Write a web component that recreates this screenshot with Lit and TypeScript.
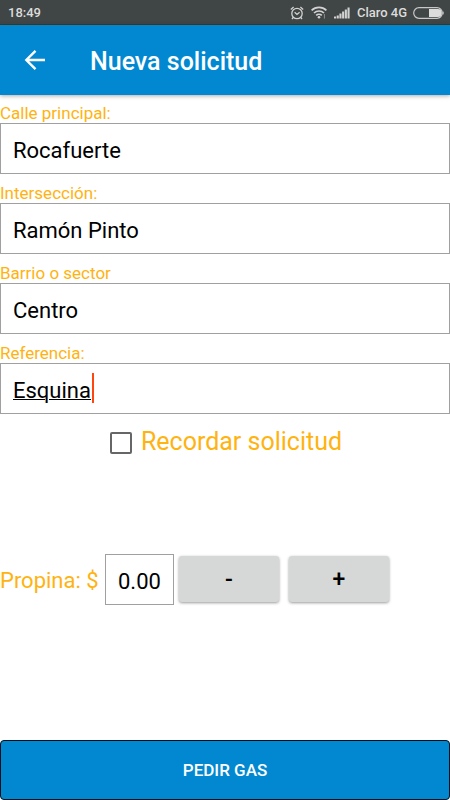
import { LitElement, html, css, svg } from "lit";
import { customElement, state } from "lit/decorators.js";
import { classMap } from "lit/directives/class-map.js";

interface Field {
  id: string;
  label: string;
  value: string;
  active?: boolean;
}

@customElement("status-bar")
class StatusBar extends LitElement {
  static styles = css`
    :host {
      display: flex;
      align-items: center;
      box-sizing: border-box;
      height: 25px;
      padding: 1px 6px 0 8px;
      background: #404545;
      border-bottom: 1px solid #3a3a22;
      color: #dcdcdc;
      font: 500 13px/24px Roboto, sans-serif;
    }
    .time {
      flex: 1;
    }
    .icon {
      display: block;
      flex: none;
    }
    .alarm {
      margin-right: 7px;
    }
    .wifi,
    .signal {
      margin-right: 7px;
    }
    .battery {
      margin-left: 6px;
    }
  `;

  render() {
    return html`
      <span class="time">18:49</span>
      <svg class="icon alarm" width="14" height="14" viewBox="0 0 14 14" fill="none" stroke="#d2d2d2" stroke-width="1.3">
        <circle cx="7" cy="7.5" r="5.2" />
        <path d="M0.8 3.4 3.6 1M13.2 3.4 10.4 1M3.2 11.5 2 13M10.8 11.5 12 13M4.6 6.2 7 8.4 9.6 6.2" />
      </svg>
      <svg class="icon wifi" width="16" height="13" viewBox="0 0 16 13" fill="none" stroke="#d2d2d2" stroke-width="1.7">
        <path d="M0.6 4.4a10.6 10.6 0 0 1 14.8 0M3 7a7.2 7.2 0 0 1 10 0M5.2 9.4a4 4 0 0 1 5.6 0" />
        <circle cx="8" cy="11.2" r="1.3" fill="#d2d2d2" stroke="none" />
        <path d="M13.4 8v4.6" stroke="#8c8f8f" stroke-width="1" />
      </svg>
      <svg class="icon signal" width="16" height="12" viewBox="0 0 16 12" fill="#d2d2d2">
        ${[2, 3, 5, 7, 9, 11].map(
          (h, i) => svg`<rect x=${i * 2.7} y=${11.5 - h} width="2.1" height=${h} />`
        )}
      </svg>
      <span>Claro 4G</span>
      <svg class="icon battery" width="31" height="12" viewBox="0 0 31 12">
        <rect x="0.7" y="0.7" width="28.6" height="10.6" rx="5.3" fill="none" stroke="#c8c8c8" stroke-width="1.2" />
        <path d="M16 2h8.8a4 4 0 0 1 0 8H16z" fill="#dcdcdc" />
        <path d="M30.2 4.6v2.8" stroke="#c8c8c8" stroke-width="1" />
      </svg>
    `;
  }
}

@customElement("app-root")
class AppRoot extends LitElement {
  static styles = css`
    :host {
      display: flex;
      flex-direction: column;
      min-height: 100vh;
      background: #ffffff;
      color: #000000;
      font-family: Roboto, sans-serif;
    }
    * {
      box-sizing: border-box;
    }
    .header {
      display: flex;
      align-items: center;
      gap: 40px;
      height: 70px;
      padding-left: 20px;
      background: #0288d1;
      box-shadow: 0 1px 4px rgba(60, 40, 30, 0.4);
      color: #ffffff;
    }
    .back {
      display: block;
      width: 30px;
      height: 30px;
      padding: 0;
      border: 0;
      background: none;
    }
    .back svg {
      display: block;
    }
    .title {
      margin: 0;
      padding-top: 4px;
      font-size: 25px;
      font-weight: 500;
      line-height: 32px;
    }
    .form {
      display: flex;
      flex-direction: column;
      flex: 1;
    }
    .fields {
      display: grid;
      gap: 1px;
    }
    .label {
      display: block;
      height: 28px;
      padding-top: 4px;
      color: #ffb310;
      font-size: 17px;
      line-height: 28px;
    }
    .box {
      position: relative;
    }
    .input {
      display: block;
      width: 100%;
      height: 51px;
      margin: 0;
      padding: 4px 12px 0;
      border: 1px solid #a0a0a0;
      border-radius: 0;
      outline: 0;
      background: #ffffff;
      color: #000000;
      font: 400 22px/32px Roboto, sans-serif;
    }
    .input.active {
      caret-color: transparent;
      text-decoration: underline;
      text-decoration-thickness: 1px;
    }
    .caret {
      position: absolute;
      left: 92px;
      top: 10px;
      width: 2px;
      height: 30px;
      background: #ff4510;
    }
    .remember {
      display: flex;
      align-items: center;
      justify-content: center;
      gap: 9px;
      height: 56px;
      padding-left: 2px;
      color: #ffb310;
      font-size: 25px;
      line-height: 32px;
    }
    .check {
      appearance: none;
      width: 22px;
      height: 22px;
      margin: 2px 0 0;
      border: 2px solid #666666;
      border-radius: 2px;
      background: #ffffff;
    }
    .check:checked {
      background: #0288d1;
    }
    .tip {
      display: flex;
      align-items: center;
      margin-top: 84px;
    }
    .tip-label {
      width: 105px;
      padding-top: 2px;
      color: #ffb310;
      font-size: 22px;
      line-height: 32px;
    }
    .amount {
      width: 69px;
      margin-right: 5px;
    }
    .step {
      width: 100px;
      height: 46px;
      margin: 0 10px 2px 0;
      padding: 2px 0 0;
      border: 0;
      border-radius: 3px;
      background: #d6d8d7;
      box-shadow: 0 1px 3px rgba(0, 0, 0, 0.4);
      color: #000000;
      font: 500 23px/32px Roboto, sans-serif;
    }
    .submit {
      height: 60px;
      margin-top: auto;
      padding: 0;
      border: 1px solid #001018;
      border-radius: 4px;
      background: #0288d1;
      color: #ffffff;
      font: 500 17px/24px Roboto, sans-serif;
    }
  `;

  @state() private tip = 0;

  private fields: Field[] = [
    { id: "calle", label: "Calle principal:", value: "Rocafuerte" },
    { id: "interseccion", label: "Intersección:", value: "Ramón Pinto" },
    { id: "barrio", label: "Barrio o sector", value: "Centro" },
    { id: "referencia", label: "Referencia:", value: "Esquina", active: true },
  ];

  private step(delta: number) {
    this.tip = Math.max(0, this.tip + delta);
  }

  private renderField(f: Field) {
    return html`
      <div>
        <label class="label" for=${f.id}>${f.label}</label>
        <div class="box">
          <input
            id=${f.id}
            type="text"
            class=${classMap({ input: true, active: !!f.active })}
            .value=${f.value}
            spellcheck="false"
          />
          ${f.active ? html`<span class="caret"></span>` : null}
        </div>
      </div>
    `;
  }

  render() {
    return html`
      <status-bar></status-bar>
      <header class="header">
        <button class="back" type="button" aria-label="Atrás">
          <svg width="30" height="30" viewBox="0 0 30 30" fill="none" stroke="#ffffff" stroke-width="2.4">
            <path d="M25 15H7M15.5 5.8 6.3 15l9.2 9.2" />
          </svg>
        </button>
        <h1 class="title">Nueva solicitud</h1>
      </header>
      <form class="form" @submit=${(e: Event) => e.preventDefault()}>
        <div class="fields">${this.fields.map((f) => this.renderField(f))}</div>
        <label class="remember">
          <input class="check" type="checkbox" />
          <span>Recordar solicitud</span>
        </label>
        <div class="tip">
          <label class="tip-label" for="propina">Propina: $</label>
          <input id="propina" class="input amount" type="text" .value=${this.tip.toFixed(2)} />
          <button class="step" type="button" @click=${() => this.step(-0.25)}>-</button>
          <button class="step" type="button" @click=${() => this.step(0.25)}>+</button>
        </div>
        <button class="submit" type="submit">PEDIR GAS</button>
      </form>
    `;
  }
}
